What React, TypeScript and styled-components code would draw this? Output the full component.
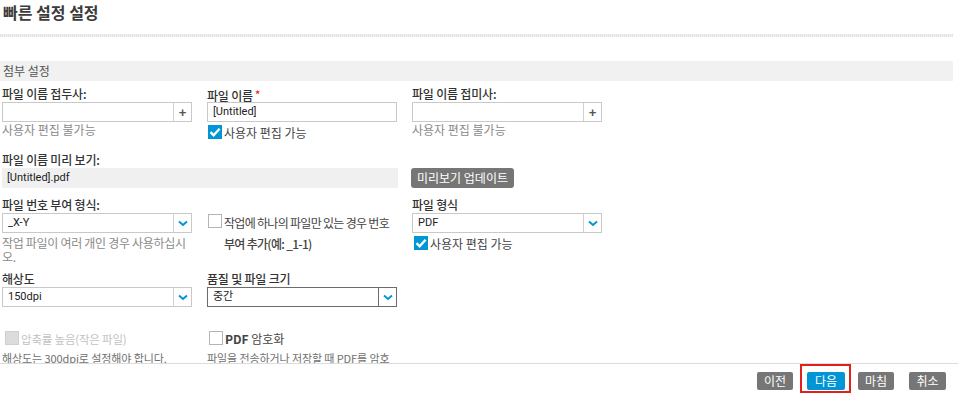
import React from "react";
import styled, { createGlobalStyle } from "styled-components";

const Global = createGlobalStyle`
  html, body { margin: 0; padding: 0; background: #fff; }
  body { font-family: "Noto Sans CJK KR", "Noto Sans", sans-serif; font-size: 12px; color: #444; }
  * { box-sizing: border-box; }
`;

const Page = styled.div`
  width: 958px;
  height: 400px;
  display: flex;
  flex-direction: column;
  background: #fff;
`;

const Scroll = styled.div`
  height: 363px;
  overflow: hidden;
  padding-right: 5px;
`;

const Title = styled.h1`
  margin: 0;
  height: 34px;
  padding-left: 3px;
  font-size: 16px;
  line-height: 24px;
  font-weight: 700;
  color: #3c3c3c;
`;

const Separator = styled.div`
  height: 3px;
  background: repeating-linear-gradient(90deg, #e4e4e4 0 1px, #efefef 1px 2px);
  margin-bottom: 24px;
`;

const SectionBar = styled.div`
  height: 20px;
  line-height: 20px;
  background: #f1f1f1;
  padding-left: 3px;
  font-size: 12px;
  color: #555;
`;

const Row = styled.div<{ $mt: number }>`
  display: grid;
  grid-template-columns: 205px 205px 205px;
  padding-left: 2px;
  margin-top: ${(p) => p.$mt}px;
`;

const Col = styled.div<{ $pt?: number }>`
  display: flex;
  flex-direction: column;
  padding-top: ${(p) => p.$pt ?? 0}px;
`;

const Label = styled.div`
  height: 16px;
  line-height: 16px;
  font-size: 12px;
  font-weight: 500;
  color: #333;
  white-space: nowrap;
  letter-spacing: -0.2px;
`;

const Star = styled.span`
  color: #e0201b;
  font-size: 11px;
  margin-left: 2px;
  vertical-align: 2px;
`;

const Field = styled.div<{ $dark?: boolean }>`
  width: 190px;
  height: 20px;
  display: flex;
  border: 1px solid ${(p) => (p.$dark ? "#6b6b6b" : "#c9c9c9")};
  background: #fff;
`;

const FieldText = styled.div`
  flex: 1;
  padding-left: 5px;
  line-height: 18px;
  font-family: "Roboto", "Noto Sans CJK KR", sans-serif;
  font-size: 11px;
  color: #222;
  white-space: nowrap;
`;

const Addon = styled.div<{ $dark?: boolean }>`
  width: 18px;
  border-left: 1px solid ${(p) => (p.$dark ? "#6b6b6b" : "#d0d0d0")};
  display: flex;
  align-items: center;
  justify-content: center;
  color: #555;
  font-weight: 700;
  font-size: 13px;
  font-family: "Liberation Sans", sans-serif;
`;

const Hint = styled.div`
  width: 192px;
  line-height: 16px;
  font-size: 12px;
  color: #8a8a8a;
  letter-spacing: 0;
`;

const WrapHint = styled(Hint)`
  margin-top: 3px;
  line-height: 13.5px;
  letter-spacing: -0.3px;
`;

const NoteHint = styled.div`
  width: 190px;
  margin-top: 4px;
  line-height: 16px;
  font-size: 11px;
  color: #707070;
  letter-spacing: -0.1px;
`;

const CheckRow = styled.label<{ $ml?: number; $mt?: number; $disabled?: boolean }>`
  display: flex;
  align-items: center;
  gap: 2px;
  height: 16px;
  margin-top: ${(p) => p.$mt ?? 2}px;
  margin-left: ${(p) => p.$ml ?? 1}px;
  font-size: 12px;
  color: ${(p) => (p.$disabled ? "#c2c2c2" : "#444")};
  white-space: nowrap;
`;

const Box = styled.span<{ $checked?: boolean; $disabled?: boolean }>`
  width: 14px;
  height: 14px;
  flex: none;
  display: inline-flex;
  align-items: center;
  justify-content: center;
  border: 1px solid
    ${(p) => (p.$checked ? "#0096d6" : p.$disabled ? "#cfcfcf" : "#b5b5b5")};
  background: ${(p) => (p.$checked ? "#0096d6" : p.$disabled ? "#dcdcdc" : "#fff")};
`;

const SmallText = styled.span`
  font-size: 11.5px;
  letter-spacing: -0.2px;
`;

const WrapCheck = styled.div`
  display: flex;
  align-items: flex-start;
  gap: 2px;
  margin-left: 1px;
  width: 190px;
`;

const WrapCheckText = styled.div`
  line-height: 20.5px;
  margin-top: -1px;
  font-size: 12px;
  color: #444;
  letter-spacing: -0.7px;
  width: 178px;
`;

const Bold = styled.span<{ $w?: number }>`
  font-weight: ${(p) => p.$w ?? 700};
`;

const Preview = styled.div`
  grid-column: 1 / span 2;
  width: 396px;
  height: 20px;
  line-height: 20px;
  background: #f0f0f0;
  padding-left: 5px;
  font-family: "Roboto", sans-serif;
  font-size: 11px;
  color: #222;
`;

const GrayButton = styled.button<{ $primary?: boolean; $w: number }>`
  width: ${(p) => p.$w}px;
  height: 18px;
  padding: 0;
  border: none;
  border-radius: 2px;
  background: ${(p) => (p.$primary ? "#0096d6" : "#767676")};
  color: #fff;
  font-family: "Noto Sans CJK KR", sans-serif;
  font-size: 12px;
  line-height: 18px;
  cursor: pointer;
  white-space: nowrap;
`;

const UpdateButton = styled(GrayButton)`
  grid-column: 3;
  justify-self: start;
  margin-left: -1px;
  height: 20px;
  line-height: 20px;
  border-radius: 3px;
`;

const Footer = styled.div`
  height: 37px;
  border-top: 1px solid #dcdcdc;
  display: flex;
  align-items: flex-start;
  justify-content: flex-end;
  padding-right: 12px;
  padding-top: 8px;
`;

const FooterSlot = styled.span<{ $ml: number }>`
  position: relative;
  display: inline-flex;
  margin-left: ${(p) => p.$ml}px;
`;

const HighlightRing = styled.span`
  position: absolute;
  left: -7px;
  right: -6px;
  top: -8px;
  bottom: -3px;
  border: 2px solid #e0201b;
  pointer-events: none;
`;

const Check = () => (
  <svg width="12" height="10" viewBox="0 0 12 10">
    <path d="M1.5 5.2 L4.6 8.2 L10.6 1.8" fill="none" stroke="#fff" strokeWidth="2.4" />
  </svg>
);

const Chevron = () => (
  <svg width="10" height="7" viewBox="0 0 10 7">
    <path d="M1 1.5 L5 5 L9 1.5" fill="none" stroke="#0096d6" strokeWidth="2" />
  </svg>
);

const Input = ({ value = "", plus = false }: { value?: string; plus?: boolean }) => (
  <Field>
    <FieldText>{value}</FieldText>
    {plus && <Addon>+</Addon>}
  </Field>
);

const Select = ({ value, dark = false }: { value: string; dark?: boolean }) => (
  <Field $dark={dark}>
    <FieldText>{value}</FieldText>
    <Addon $dark={dark}>
      <Chevron />
    </Addon>
  </Field>
);

const Checkbox = ({
  checked,
  disabled,
  children,
  ml,
  mt,
}: {
  checked?: boolean;
  disabled?: boolean;
  children: React.ReactNode;
  ml?: number;
  mt?: number;
}) => (
  <CheckRow $ml={ml} $mt={mt} $disabled={disabled}>
    <Box $checked={checked} $disabled={disabled}>
      {checked && <Check />}
    </Box>
    <span>{children}</span>
  </CheckRow>
);

const footerButtons = [
  { label: "이전", w: 36, ml: 0 },
  { label: "다음", w: 38, ml: 14, primary: true },
  { label: "마침", w: 36, ml: 13 },
  { label: "취소", w: 37, ml: 15 },
];

export default function App() {
  return (
    <Page>
      <Global />
      <Scroll>
        <Title>빠른 설정 설정</Title>
        <Separator />
        <SectionBar>첨부 설정</SectionBar>

        <Row $mt={5}>
          <Col>
            <Label>파일 이름 접두사:</Label>
            <Input plus />
            <Hint>사용자 편집 불가능</Hint>
          </Col>
          <Col>
            <Label>
              파일 이름<Star>*</Star>
            </Label>
            <Input value="[Untitled]" />
            <Checkbox checked>사용자 편집 가능</Checkbox>
          </Col>
          <Col>
            <Label>파일 이름 접미사:</Label>
            <Input plus />
            <Hint>사용자 편집 불가능</Hint>
          </Col>
        </Row>

        <Row $mt={12}>
          <Label>파일 이름 미리 보기:</Label>
          <div />
          <div />
          <Preview>[Untitled].pdf</Preview>
          <UpdateButton $w={103}>미리보기 업데이트</UpdateButton>
        </Row>

        <Row $mt={9}>
          <Col>
            <Label>파일 번호 부여 형식:</Label>
            <Select value="_X-Y" />
            <WrapHint>작업 파일이 여러 개인 경우 사용하십시오.</WrapHint>
          </Col>
          <Col $pt={17}>
            <WrapCheck>
              <Box />
              <WrapCheckText>
                작업에 하나의 파일만 있는 경우 번호 <Bold $w={500}>부여 추가(예: _1-1)</Bold>
              </WrapCheckText>
            </WrapCheck>
          </Col>
          <Col>
            <Label>파일 형식</Label>
            <Select value="PDF" />
            <Checkbox checked ml={2}>
              사용자 편집 가능
            </Checkbox>
          </Col>
        </Row>

        <Row $mt={8}>
          <Col>
            <Label>해상도</Label>
            <Select value="150dpi" />
          </Col>
          <Col>
            <Label>품질 및 파일 크기</Label>
            <Select value="중간" dark />
          </Col>
          <Col />
        </Row>

        <Row $mt={23}>
          <Col>
            <Checkbox disabled ml={3} mt={0}>
              <SmallText>압축률 높음(작은 파일)</SmallText>
            </Checkbox>
            <NoteHint>해상도는 300dpi로 설정해야 합니다.</NoteHint>
          </Col>
          <Col>
            <Checkbox ml={2} mt={0}>
              <Bold>PDF</Bold> 암호화
            </Checkbox>
            <NoteHint>파일을 전송하거나 저장할 때 PDF를 암호화합니다.</NoteHint>
          </Col>
          <Col />
        </Row>
      </Scroll>
      <Footer>
        {footerButtons.map((b) => (
          <FooterSlot key={b.label} $ml={b.ml}>
            <GrayButton $w={b.w} $primary={b.primary}>
              {b.label}
            </GrayButton>
            {b.primary && <HighlightRing />}
          </FooterSlot>
        ))}
      </Footer>
    </Page>
  );
}
